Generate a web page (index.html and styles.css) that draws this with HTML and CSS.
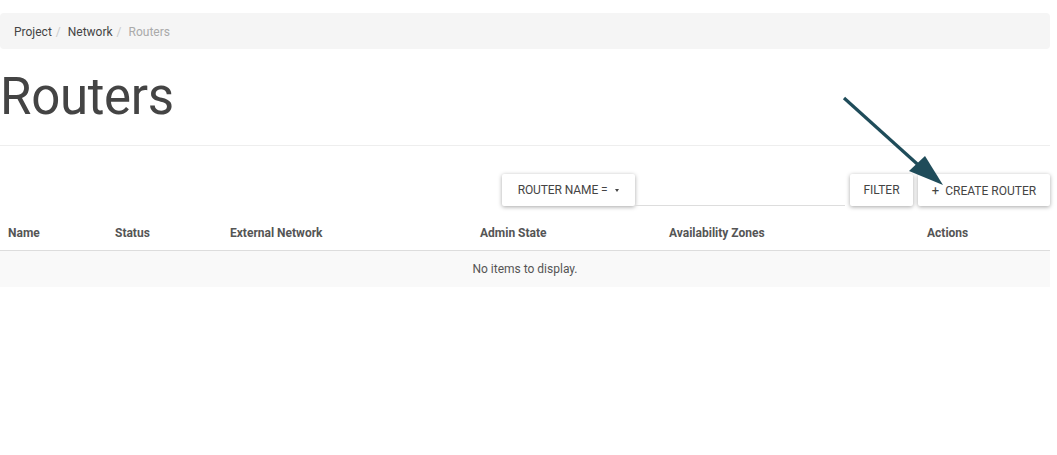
FILE: index.html
```html
<!DOCTYPE html>
<html>
<head>
<meta charset="utf-8">
<link rel="stylesheet" href="styles.css">
</head>
<body>
<div class="page">
  <ol class="breadcrumb">
    <li><a>Project</a></li>
    <li><a>Network</a></li>
    <li class="active">Routers</li>
  </ol>
  <div class="page-header">
    <h1>Routers</h1>
  </div>
  <div class="toolbar">
    <button class="btn dropdown">ROUTER NAME = <span class="caret"></span></button>
    <div class="search"></div>
    <button class="btn filter">FILTER</button>
    <button class="btn create"><span class="plus">+</span>CREATE ROUTER</button>
  </div>
  <table class="table">
    <colgroup>
      <col class="c1"><col class="c2"><col class="c3"><col class="c4"><col class="c5"><col class="c6">
    </colgroup>
    <thead>
      <tr>
        <th>Name</th>
        <th>Status</th>
        <th>External Network</th>
        <th>Admin State</th>
        <th>Availability Zones</th>
        <th>Actions</th>
      </tr>
    </thead>
    <tbody>
      <tr><td colspan="6" class="empty">No items to display.</td></tr>
    </tbody>
  </table>
  <svg class="arrow" width="120" height="110" viewBox="0 0 120 110">
    <line x1="9" y1="10" x2="90" y2="83" stroke="#1f4c5a" stroke-width="3.2"/>
    <polygon points="74,83 90,68 108,97" fill="#1f4c5a"/>
  </svg>
</div>
</body>
</html>
```

FILE: styles.css
```css
* { box-sizing: border-box; }
body {
  margin: 0;
  background: #fff;
  font-family: Roboto, "Open Sans", "Liberation Sans", sans-serif;
  color: #333;
}
.page {
  position: relative;
  width: 1050px;
}
.breadcrumb {
  list-style: none;
  margin: 13px 0 0;
  padding: 0 14px;
  height: 36px;
  line-height: 39px;
  background: #f5f5f5;
  border-radius: 4px;
  font-size: 12px;
  display: flex;
}
.breadcrumb li a { color: #444; }
.breadcrumb li + li::before {
  content: "/\00a0";
  padding: 0 4px;
  color: #ccc;
}
.breadcrumb .active { color: #aaa; }
.page-header {
  border-bottom: 1px solid #eee;
  height: 97px;
}
.page-header h1 {
  margin: 0;
  padding-top: 18px;
  font-size: 51px;
  line-height: 60px;
  font-weight: 400;
  color: #444;
  letter-spacing: -0.3px;
}
.toolbar {
  display: flex;
  align-items: stretch;
  justify-content: flex-end;
  margin-top: 28px;
  height: 32px;
}
.btn {
  font-family: inherit;
  font-size: 12px;
  color: #444;
  background: #fff;
  border: none;
  border-radius: 2px;
  box-shadow: 0 1px 4px rgba(0,0,0,0.35);
  padding: 0;
  height: 32px;
  white-space: nowrap;
  text-align: center;
  cursor: pointer;
}
.dropdown { width: 133px; letter-spacing: -0.1px; }
.caret {
  display: inline-block;
  width: 0; height: 0;
  margin-left: 5px;
  vertical-align: middle;
  border-top: 3px solid #444;
  border-left: 2.5px solid transparent;
  border-right: 2.5px solid transparent;
}
.search {
  width: 210px;
  border-bottom: 1px solid #ddd;
  margin-right: 5px;
}
.filter { width: 63px; }
.create { margin-left: 5px; width: 132px; }
.plus { margin-right: 6px; font-size: 13px; }
.table {
  margin-top: 9px;
  width: 1050px;
  border-collapse: collapse;
  table-layout: fixed;
  font-size: 12px;
}
.c1 { width: 107px; }
.c2 { width: 115px; }
.c3 { width: 250px; }
.c4 { width: 189px; }
.c5 { width: 258px; }
.c6 { width: 131px; }
.table th {
  text-align: left;
  font-weight: 700;
  color: #555;
  height: 35px;
  padding: 2px 8px 0;
  border-bottom: 1px solid #ddd;
}
.table td.empty {
  background: #f9f9f9;
  text-align: center;
  height: 37px;
  padding: 1px 0 0;
  color: #555;
}
.arrow {
  position: absolute;
  left: 835px;
  top: 75px;
}
```
